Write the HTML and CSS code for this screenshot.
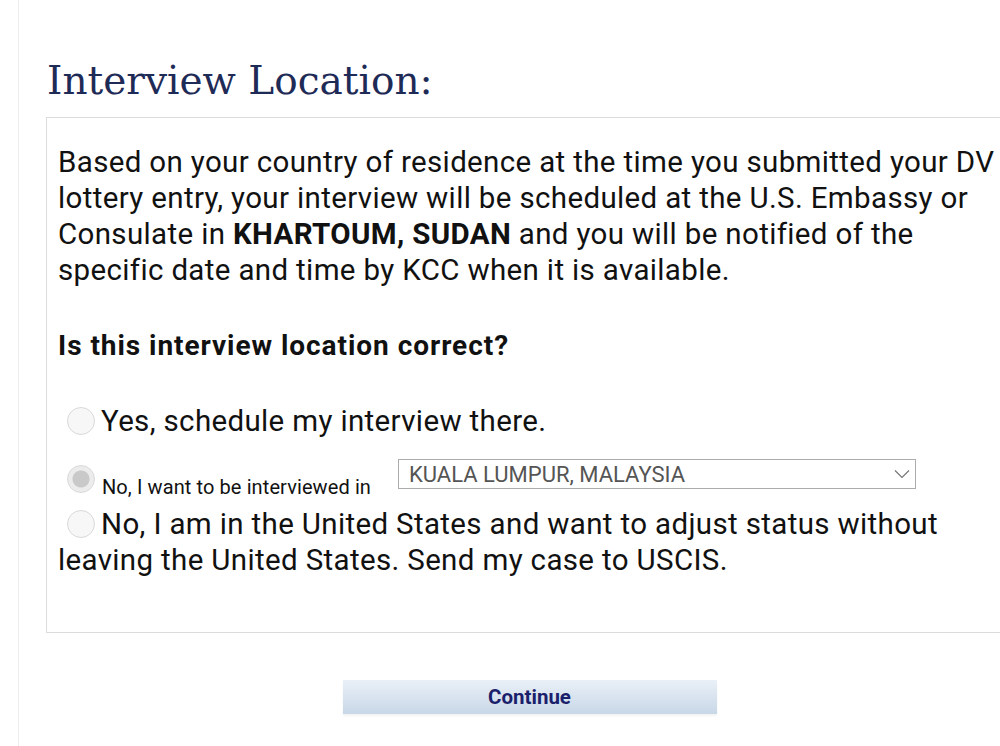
FILE: index.html
```html
<!DOCTYPE html>
<html lang="en">
<head>
    <meta charset="UTF-8">
    <meta name="viewport" content="width=device-width, initial-scale=1.0">
    <title>Interview Location</title>
    <link rel="stylesheet" href="styles.css">
</head>
<body>
    <div class="page">
        <h1 class="title">Interview Location:</h1>

        <div class="panel">
            <p class="intro">Based on your country of residence at the time you submitted your DV lottery entry, your interview will be scheduled at the U.S. Embassy or Consulate in <b>KHARTOUM, SUDAN</b> and you will be notified of the specific date and time by KCC when it is available.</p>

            <p class="question">Is this interview location correct?</p>

            <label class="choice first">
                <input type="radio" name="location" class="radio">Yes, schedule my interview there.
            </label>

            <div class="choice-alt">
                <input type="radio" name="location" class="radio" checked disabled>
                <span class="alt-label">No, I want to be interviewed in</span>
                <div class="select-wrap">
                    <select class="post-select" disabled>
                        <option>KUALA LUMPUR, MALAYSIA</option>
                    </select>
                    <svg class="chevron" width="16" height="10" viewBox="0 0 16 10">
                        <path d="M1 1.5 L8 8.5 L15 1.5" fill="none" stroke="#777" stroke-width="1.2"/>
                    </svg>
                </div>
            </div>

            <label class="choice">
                <input type="radio" name="location" class="radio">No, I am in the United States and want to adjust status without leaving the United States. Send my case to USCIS.
            </label>
        </div>

        <div class="actions">
            <button class="continue">Continue</button>
        </div>
    </div>
</body>
</html>
```

FILE: styles.css
```css
body {
    margin: 0;
    background: #fff;
    font-family: Roboto, "Liberation Sans", sans-serif;
    color: #111;
    overflow: hidden;
}
.page {
    margin-left: 18px;
    width: 1022px;
    height: 746px;
    border-left: 1px solid #ededed;
    padding-top: 55px;
    box-sizing: border-box;
}
.title {
    margin: 0 0 0 28px;
    font-family: "DejaVu Serif", serif;
    font-weight: normal;
    font-size: 39px;
    line-height: 52px;
    color: #1f2b57;
}
.panel {
    margin: 10px 0 0 27px;
    width: 944px;
    border: 1px solid #dcdcdc;
    padding: 26px 10px 54px 11px;
}
.intro {
    margin: 0;
    font-size: 29.5px;
    line-height: 36px;
    letter-spacing: 0.35px;
}
.question {
    margin: 40px 0 0;
    font-size: 28px;
    line-height: 36px;
    font-weight: bold;
    letter-spacing: 0.95px;
}
.choice {
    display: block;
    font-size: 29.5px;
    line-height: 36px;
    letter-spacing: 0.35px;
}
.choice.first {
    margin-top: 39px;
}
.radio {
    appearance: none;
    -webkit-appearance: none;
    width: 28px;
    height: 28px;
    margin: 0 6px 0 9px;
    border: 1px solid #d9d9d9;
    border-radius: 50%;
    background: #f7f7f7;
    vertical-align: -4px;
}
.radio:checked {
    background: radial-gradient(circle, #c9c9c9 0, #c9c9c9 8px, #ececec 9px, #ececec 100%);
}
.choice-alt {
    display: flex;
    align-items: flex-start;
    margin-top: 20px;
    height: 47px;
}
.choice-alt .radio {
    margin-top: 6px;
}
.alt-label {
    font-size: 20px;
    margin-top: 16px;
    margin-left: 1px;
    letter-spacing: 0.1px;
}
.select-wrap {
    position: relative;
    margin-left: 27px;
}
.post-select {
    appearance: none;
    -webkit-appearance: none;
    width: 518px;
    height: 30px;
    border: 1px solid #acacac;
    border-radius: 0;
    background: #fff;
    padding: 0 0 0 10px;
    font-family: Roboto, sans-serif;
    font-size: 22px;
    color: #555;
    opacity: 1;
}
.chevron {
    position: absolute;
    right: 6px;
    top: 10px;
}
.actions {
    display: flex;
    justify-content: center;
    padding-top: 47px;
}
.continue {
    width: 374px;
    height: 34px;
    border: none;
    background: linear-gradient(#eaf0f7, #c8d7e7);
    box-shadow: 0 2px 2px rgba(0, 0, 0, 0.05);
    font-family: Roboto, sans-serif;
    font-weight: bold;
    font-size: 20.5px;
    color: #1b1f6c;
}
```
